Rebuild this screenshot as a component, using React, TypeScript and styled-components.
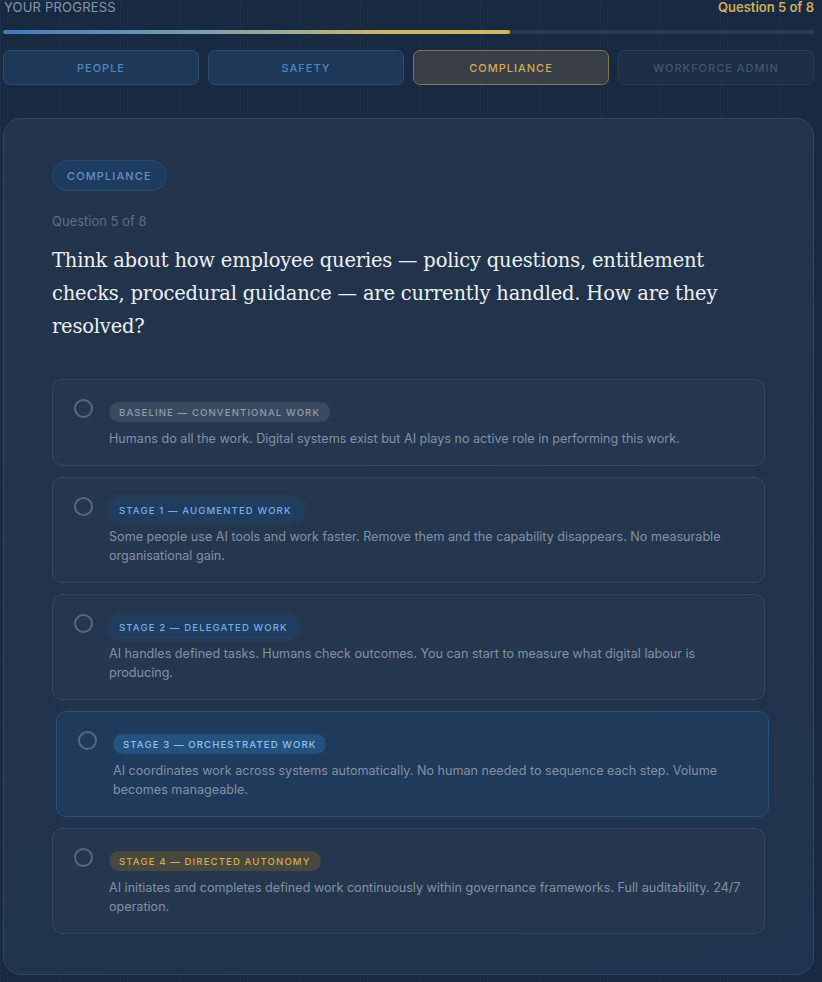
import React from "react";
import styled, { createGlobalStyle, css } from "styled-components";

const Global = createGlobalStyle`
  html, body { margin: 0; padding: 0; }
  body {
    background-color: #172a42;
    background-image:
      linear-gradient(rgba(255,255,255,0.018) 1px, transparent 1px),
      linear-gradient(90deg, rgba(255,255,255,0.018) 1px, transparent 1px);
    background-size: 60px 60px;
    font-family: "Inter", "DejaVu Sans", sans-serif;
    -webkit-font-smoothing: antialiased;
  }
  * { box-sizing: border-box; }
`;

const Page = styled.div`
  padding: 0 8px 7px 3px;
`;

const Header = styled.div`
  display: flex;
  justify-content: space-between;
  align-items: center;
  height: 14px;
  padding: 0 0 0 1px;
`;

const HeaderLabel = styled.span`
  font-size: 13px;
  letter-spacing: 0.2px;
  color: #8796a9;
  text-transform: uppercase;
`;

const HeaderCount = styled.span`
  font-size: 13px;
  font-weight: 600;
  color: #d2ad5a;
`;

const Track = styled.div`
  margin-top: 16px;
  height: 4px;
  border-radius: 2px;
  background: #273b55;
  overflow: hidden;
`;

const Fill = styled.div`
  height: 100%;
  border-radius: 2px;
  background: linear-gradient(90deg, #3b7bbd 0%, #7b9fb0 40%, #c9b668 75%, #d9b55a 100%);
`;

const Tabs = styled.div`
  margin-top: 16px;
  display: grid;
  grid-template-columns: repeat(4, 1fr);
  gap: 9px;
`;

type TabState = "done" | "active" | "todo";

const Tab = styled.div<{ $state: TabState }>`
  height: 35px;
  border-radius: 7px;
  display: flex;
  align-items: center;
  justify-content: center;
  font-size: 11px;
  font-weight: 500;
  letter-spacing: 1px;
  text-transform: uppercase;
  border: 1px solid;
  ${(p) =>
    p.$state === "done"
      ? css`
          background: #1d3858;
          border-color: #2b4b6f;
          color: #4f88c4;
        `
      : p.$state === "active"
      ? css`
          background: #383e45;
          border-color: #857650;
          color: #d2ad5a;
        `
      : css`
          background: #1b2e46;
          border-color: #263b55;
          color: #415670;
        `}
`;

const Card = styled.div`
  margin-top: 33px;
  border-radius: 18px;
  border: 1px solid #31455d;
  background: linear-gradient(170deg, #23354c 0%, #203349 50%, #1e3450 100%);
  padding: 41px 48px 40px 48px;
`;

const Badge = styled.span`
  display: inline-flex;
  align-items: center;
  height: 31px;
  padding: 0 14px;
  border-radius: 16px;
  background: #1e3c5f;
  border: 1px solid #29496d;
  color: #5d93c7;
  font-size: 11px;
  font-weight: 500;
  letter-spacing: 1.1px;
`;

const QLabel = styled.div`
  margin-top: 21px;
  font-size: 13px;
  line-height: 18px;
  color: #5b6e84;
`;

const Question = styled.h1`
  margin: 14px 0 0;
  font-family: "DejaVu Serif", "Liberation Serif", serif;
  font-weight: 400;
  font-size: 19.5px;
  line-height: 33px;
  letter-spacing: -0.2px;
  color: #eef0f3;
`;

const Options = styled.div`
  margin-top: 36px;
  display: flex;
  flex-direction: column;
  gap: 11px;
`;

const Option = styled.div<{ $selected?: boolean }>`
  display: flex;
  gap: 16px;
  padding: 19px 20px 17px 21px;
  border-radius: 10px;
  border: 1px solid;
  ${(p) =>
    p.$selected
      ? css`
          background: #1f3a5a;
          border-color: #2d4e74;
          transform: translateX(4px);
        `
      : css`
          background: #25374e;
          border-color: #34485f;
        `}
`;

const Radio = styled.div`
  flex: none;
  width: 19px;
  height: 19px;
  border-radius: 50%;
  border: 2px solid #56687e;
`;

const Body = styled.div`
  flex: 1;
  padding-top: 3px;
`;

type TagTone = "base" | "blue" | "bright" | "gold";

const Tag = styled.div<{ $tone: TagTone }>`
  display: flex;
  width: fit-content;
  align-items: center;
  height: 20px;
  padding: 0 10px;
  border-radius: 10px;
  font-size: 9.6px;
  font-weight: 500;
  letter-spacing: 1.1px;
  ${(p) =>
    p.$tone === "base"
      ? css`
          background: #3a4a5e;
          color: #8e9cae;
        `
      : p.$tone === "blue"
      ? css`
          background: #1f3d60;
          color: #78aee0;
          box-shadow: 0 0 8px rgba(40, 100, 170, 0.35);
        `
      : p.$tone === "bright"
      ? css`
          background: #24527f;
          color: #8fc0ee;
        `
      : css`
          background: #48483f;
          color: #d2ad5a;
        `}
`;

const Desc = styled.p`
  margin: 7px 0 0;
  font-size: 12.6px;
  line-height: 19px;
  color: #8291a5;
`;

const tabs: { label: string; state: TabState }[] = [
  { label: "People", state: "done" },
  { label: "Safety", state: "done" },
  { label: "Compliance", state: "active" },
  { label: "Workforce Admin", state: "todo" },
];

const options: { tag: string; tone: TagTone; text: string; selected?: boolean }[] = [
  {
    tag: "BASELINE — CONVENTIONAL WORK",
    tone: "base",
    text: "Humans do all the work. Digital systems exist but AI plays no active role in performing this work.",
  },
  {
    tag: "STAGE 1 — AUGMENTED WORK",
    tone: "blue",
    text: "Some people use AI tools and work faster. Remove them and the capability disappears. No measurable organisational gain.",
  },
  {
    tag: "STAGE 2 — DELEGATED WORK",
    tone: "blue",
    text: "AI handles defined tasks. Humans check outcomes. You can start to measure what digital labour is producing.",
  },
  {
    tag: "STAGE 3 — ORCHESTRATED WORK",
    tone: "bright",
    text: "AI coordinates work across systems automatically. No human needed to sequence each step. Volume becomes manageable.",
    selected: true,
  },
  {
    tag: "STAGE 4 — DIRECTED AUTONOMY",
    tone: "gold",
    text: "AI initiates and completes defined work continuously within governance frameworks. Full auditability. 24/7 operation.",
  },
];

export default function App() {
  const progress = 5 / 8;
  return (
    <>
      <Global />
      <Page>
        <Header>
          <HeaderLabel>Your Progress</HeaderLabel>
          <HeaderCount>Question 5 of 8</HeaderCount>
        </Header>
        <Track>
          <Fill style={{ width: `${progress * 100}%` }} />
        </Track>
        <Tabs>
          {tabs.map((t) => (
            <Tab key={t.label} $state={t.state}>
              {t.label}
            </Tab>
          ))}
        </Tabs>
        <Card>
          <Badge>COMPLIANCE</Badge>
          <QLabel>Question 5 of 8</QLabel>
          <Question>
            Think about how employee queries — policy questions, entitlement checks, procedural
            guidance — are currently handled. How are they resolved?
          </Question>
          <Options>
            {options.map((o) => (
              <Option key={o.tag} $selected={o.selected}>
                <Radio />
                <Body>
                  <Tag $tone={o.tone}>{o.tag}</Tag>
                  <Desc>{o.text}</Desc>
                </Body>
              </Option>
            ))}
          </Options>
        </Card>
      </Page>
    </>
  );
}
